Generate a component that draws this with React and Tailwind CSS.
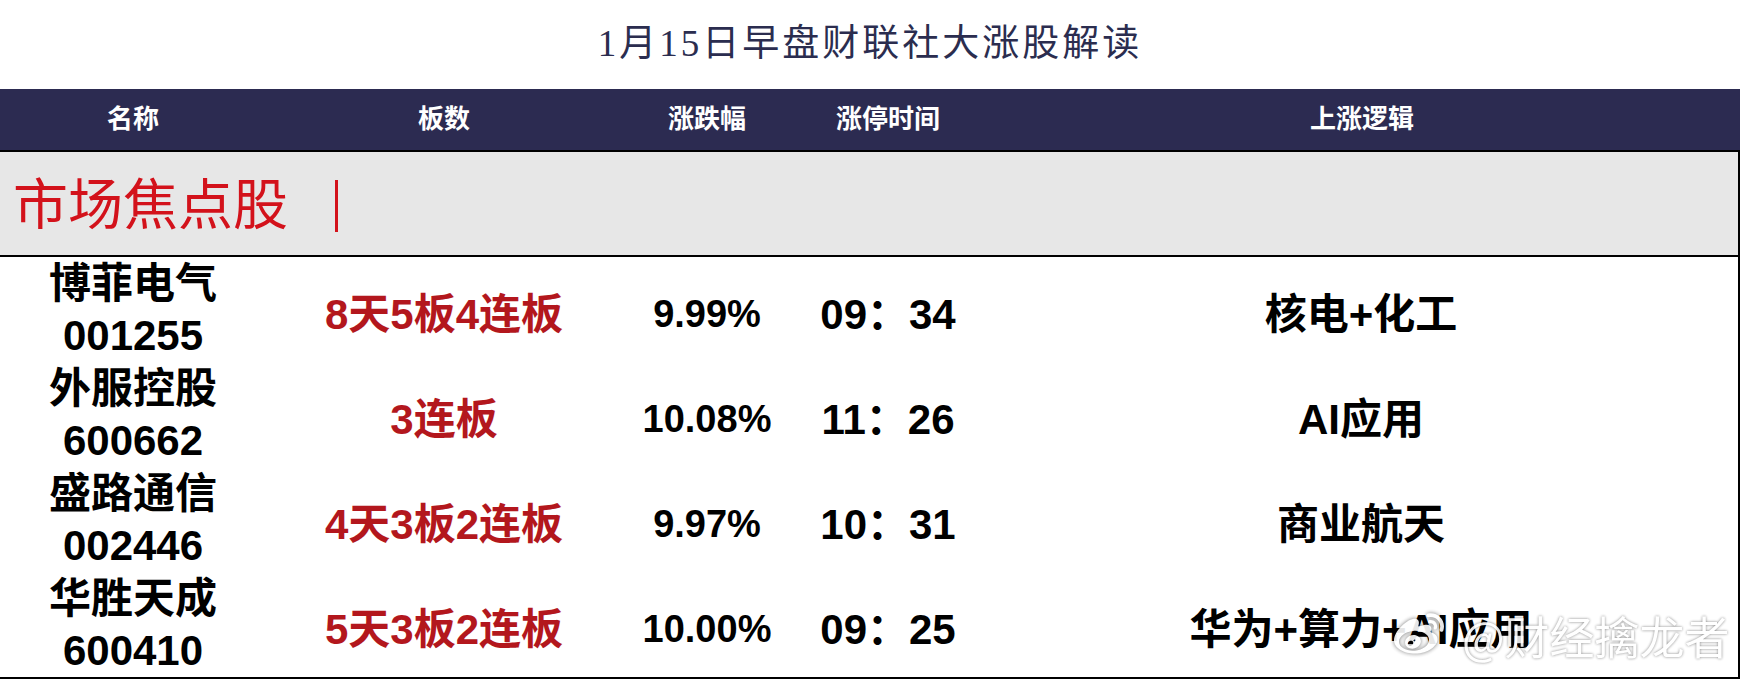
import { FaWeibo } from 'react-icons/fa';

const rows = [
  { name: '博菲电气', code: '001255', boards: '8天5板4连板', pct: '9.99%', time: '09：34', logic: '核电+化工' },
  { name: '外服控股', code: '600662', boards: '3连板', pct: '10.08%', time: '11：26', logic: 'AI应用' },
  { name: '盛路通信', code: '002446', boards: '4天3板2连板', pct: '9.97%', time: '10：31', logic: '商业航天' },
  { name: '华胜天成', code: '600410', boards: '5天3板2连板', pct: '10.00%', time: '09：25', logic: '华为+算力+AI应用' },
];

const cols = 'grid grid-cols-[266px_356px_170px_192px_1fr]';
const sans = "font-['Liberation_Sans','Noto_Sans_CJK_SC',sans-serif]";

export default function App() {
  return (
    <div className="relative w-[1740px] h-[682px] overflow-hidden bg-white">
      <div className="h-[89px] flex items-center justify-center pb-[2px]">
        <h1 className="font-['Liberation_Serif','Noto_Sans_CJK_SC',serif] text-[37px] tracking-[3px] text-[#2b2d4f]">
          1月15日早盘财联社大涨股解读
        </h1>
      </div>

      <div className={`${cols} ${sans} h-[61px] items-center bg-[#2c2b51] text-center text-[26px] font-semibold text-white`}>
        <div>名称</div>
        <div>板数</div>
        <div>涨跌幅</div>
        <div>涨停时间</div>
        <div>上涨逻辑</div>
      </div>

      <div className="border-r-2 border-b-2 border-black">
        <div className="h-[107px] border-y-2 border-black bg-[#e7e7e7] flex items-center pl-[13px] pt-[4px]">
          <span className="font-['Liberation_Serif','Noto_Sans_CJK_SC',serif] text-[55px] leading-none text-[#d3121b]">
            市场焦点股
          </span>
          <span className="ml-[47px] h-[52px] w-[3px] bg-[#d3121b]" />
        </div>

        {rows.map((r) => (
          <div key={r.code} className={`${cols} ${sans} h-[105px] items-center text-center font-bold`}>
            <div className="text-[42px] leading-[52px] text-black">
              <div>{r.name}</div>
              <div>{r.code}</div>
            </div>
            <div className="pt-[10px] text-[42px] text-[#b3171d]">{r.boards}</div>
            <div className="pt-[10px] text-[38px] text-black">{r.pct}</div>
            <div className="pt-[10px] text-[42px] text-black">{r.time}</div>
            <div className="pt-[10px] text-[42px] text-black">{r.logic}</div>
          </div>
        ))}
      </div>

      <div className="absolute left-[1394px] top-[610px] flex items-center gap-[18px] text-white opacity-90 [text-shadow:0_0_3px_rgba(0,0,0,0.55)]">
        <FaWeibo className="w-[50px] h-[50px] drop-shadow-[0_0_2px_rgba(0,0,0,0.6)]" />
        <span className="font-['Noto_Sans_CJK_SC',sans-serif] text-[45px] leading-none">@财经擒龙者</span>
      </div>
    </div>
  );
}
